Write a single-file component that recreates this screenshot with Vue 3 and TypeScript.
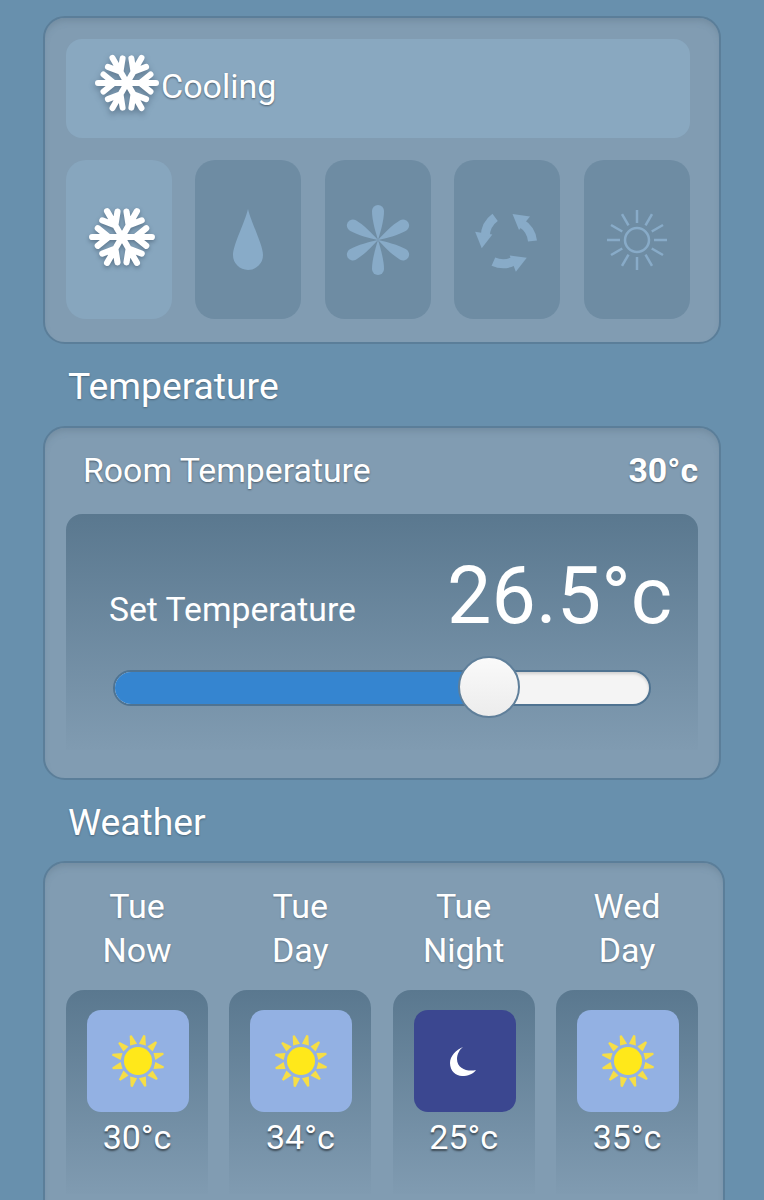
<template>
  <div class="page">
    <section class="panel mode-panel">
      <div class="current">
        <svg class="flake-big" viewBox="-33 -33 66 66">
          <g v-for="a in flakeAngles" :key="a" :transform="`rotate(${a})`">
            <path class="flake-arm" d="M0 0H29M13 0L23.5 -8.5M13 0L23.5 8.5" />
          </g>
        </svg>
        <span class="current-label">Cooling</span>
      </div>
      <div class="modes">
        <div class="mode active">
          <svg class="flake-small" viewBox="-33 -33 66 66">
            <g v-for="a in flakeAngles" :key="a" :transform="`rotate(${a})`">
              <path class="flake-arm" d="M0 0H29M13 0L23.5 -8.5M13 0L23.5 8.5" />
            </g>
          </svg>
        </div>
        <div class="mode">
          <svg class="mode-icon" viewBox="-36 -36 72 72">
            <path class="fill" d="M0 -31C3 -18 15 5 15 15A15 15 0 0 1 -15 15C-15 5 -3 -18 0 -31Z" />
          </svg>
        </div>
        <div class="mode">
          <svg class="mode-icon" viewBox="-36 -36 72 72">
            <path
              v-for="a in flakeAngles"
              :key="a"
              class="fill"
              :transform="`rotate(${a})`"
              d="M0 0C-2.5 -8 -6 -20 -6 -29A6 6 0 0 1 6 -29C6 -20 2.5 -8 0 0Z"
            />
          </svg>
        </div>
        <div class="mode">
          <svg class="mode-icon" viewBox="-36 -36 72 72">
            <g v-for="a in recycleAngles" :key="a" :transform="`rotate(${a})`">
              <path class="fill" d="M5.5 -26L23 -23.5L12 -10Z" />
              <path class="arc" d="M14 -17A24 24 0 0 1 25.5 1" />
            </g>
          </svg>
        </div>
        <div class="mode">
          <svg class="mode-icon" viewBox="-36 -36 72 72">
            <circle class="ring" cx="0" cy="0" r="12" />
            <path
              v-for="a in rayAngles"
              :key="a"
              class="ray"
              :transform="`rotate(${a})`"
              d="M17 0H30"
            />
          </svg>
        </div>
      </div>
    </section>

    <h2 class="heading">Temperature</h2>
    <section class="panel temp-panel">
      <div class="room">
        <span>Room Temperature</span>
        <strong>30°c</strong>
      </div>
      <div class="setter">
        <div class="set-row">
          <span class="set-label">Set Temperature</span>
          <span class="set-value">{{ setTemp }}°c</span>
        </div>
        <div class="slider">
          <div class="slider-fill" :style="{ width: sliderPercent + '%' }"></div>
          <div class="slider-thumb" :style="{ left: sliderPercent + '%' }"></div>
        </div>
      </div>
    </section>

    <h2 class="heading">Weather</h2>
    <section class="panel weather-panel">
      <div class="days">
        <div class="day" v-for="f in forecast" :key="f.day + f.part">
          <div class="day-name">{{ f.day }}<br />{{ f.part }}</div>
          <div class="card">
            <div class="sky" :class="{ night: f.night }">
              <svg class="sky-icon" viewBox="-30 -30 60 60">
                <path
                  v-if="f.night"
                  class="moon"
                  d="M-2 -14C-9 -11 -15 -5 -15 2C-15 10 -9 15 -3 15C3 15 8 13 11 9C3 11 -8 8 -8 -2C-8 -7 -5 -12 -2 -14Z"
                />
                <template v-else>
                  <circle class="sun" cx="0" cy="0" r="14" />
                  <path
                    v-for="a in sunRays"
                    :key="a"
                    class="sun-ray"
                    :transform="`rotate(${a})`"
                    d="M17 -3.6L26.5 -1.5L26.5 0.5L17 3.6Z"
                  />
                </template>
              </svg>
            </div>
            <div class="card-temp">{{ f.temp }}°c</div>
          </div>
        </div>
      </div>
    </section>
  </div>
</template>

<script setup lang="ts">
import { ref } from 'vue';

interface Forecast {
  day: string;
  part: string;
  temp: number;
  night?: boolean;
}

const flakeAngles = [0, 60, 120, 180, 240, 300];
const recycleAngles = [0, 120, 240];
const rayAngles = [0, 30, 60, 90, 120, 150, 180, 210, 240, 270, 300, 330];
const sunRays = rayAngles.map(a => a + 15);

const setTemp = ref(26.5);
const sliderPercent = ref(70);

const forecast = ref<Forecast[]>([
  { day: 'Tue', part: 'Now', temp: 30 },
  { day: 'Tue', part: 'Day', temp: 34 },
  { day: 'Tue', part: 'Night', temp: 25, night: true },
  { day: 'Wed', part: 'Day', temp: 35 },
]);
</script>

<style>
html, body {
  margin: 0;
  background: #6890ad;
}
</style>

<style scoped>
.page {
  box-sizing: border-box;
  height: 1200px;
  overflow: hidden;
  padding: 16px 0 0 43px;
  font-family: Roboto, "Liberation Sans", sans-serif;
  color: #fff;
  background: #6890ad;
}

.panel {
  box-sizing: border-box;
  width: 678px;
  background: #819cb2;
  border: 2px solid #5b7e99;
  border-radius: 22px;
  box-shadow: inset 0 5px 6px -2px rgba(88, 112, 128, 0.35);
}

.mode-panel {
  height: 328px;
  padding: 21px 29px 0 21px;
}

.mode-panel + .heading {
  margin-bottom: 19px;
}

.current {
  display: flex;
  align-items: center;
  gap: 1px;
  height: 99px;
  padding-left: 28px;
  background: #89a8c0;
  border-radius: 16px;
  font-size: 34px;
  text-shadow: 0 1px 2px rgba(0, 0, 0, 0.45);
}

.current-label {
  padding-bottom: 6px;
}

.flake-big {
  width: 66px;
  height: 66px;
  margin-top: -12px;
  filter: drop-shadow(0 3px 3px rgba(40, 60, 80, 0.45));
}

.flake-arm {
  fill: none;
  stroke: #fff;
  stroke-width: 6;
  stroke-linecap: round;
}

.modes {
  display: flex;
  gap: 23.4px;
  margin-top: 22px;
}

.mode {
  display: flex;
  align-items: center;
  justify-content: center;
  width: 106px;
  height: 159px;
  background: #6e8ca3;
  border-radius: 20px;
}

.mode.active {
  background: #87a6be;
}

.flake-small {
  width: 68px;
  height: 68px;
  margin: -5px 0 0 6px;
  filter: drop-shadow(0 2px 2px rgba(40, 60, 80, 0.45));
}

.mode-icon {
  width: 72px;
  height: 72px;
}

.fill {
  fill: #88abc8;
}

.arc {
  fill: none;
  stroke: #88abc8;
  stroke-width: 9;
}

.ring {
  fill: none;
  stroke: #88abc8;
  stroke-width: 2.5;
}

.ray {
  fill: none;
  stroke: #88abc8;
  stroke-width: 2.5;
}

.heading {
  margin: 21px 0 18px;
  padding-left: 25px;
  font-size: 37.3px;
  font-weight: 400;
  line-height: 42px;
  text-shadow: 0 1px 2px rgba(0, 0, 0, 0.3);
}

.temp-panel {
  height: 354px;
  padding: 0 21px;
}

.room {
  display: flex;
  justify-content: space-between;
  align-items: center;
  box-sizing: border-box;
  height: 86px;
  padding: 0 0 2px 17px;
  font-size: 33.8px;
  text-shadow: 0 1px 2px rgba(0, 0, 0, 0.4);
}

.room strong {
  font-weight: 700;
}

.setter {
  height: 236px;
  padding: 0 47px;
  box-sizing: border-box;
  background: linear-gradient(#5a788f, #809bb1);
  border-radius: 16px 16px 0 0;
}

.set-row {
  display: flex;
  justify-content: space-between;
  align-items: flex-end;
  height: 119px;
  margin-right: -21px;
  margin-left: -4px;
}

.set-label {
  margin-bottom: 1px;
  font-size: 33.7px;
  line-height: 44px;
}

.set-value {
  margin-bottom: -6px;
  font-size: 79px;
  line-height: 86px;
}

.slider {
  position: relative;
  box-sizing: border-box;
  width: 538px;
  height: 36px;
  margin-top: 37px;
  background: #f4f4f4;
  border: 2px solid #4f7391;
  border-radius: 18px;
  box-shadow: inset 0 2px 3px rgba(0, 0, 0, 0.15);
}

.slider-fill {
  height: 100%;
  background: #3585d0;
  border-radius: 16px 0 0 16px;
}

.slider-thumb {
  position: absolute;
  top: calc(50% - 1px);
  width: 62px;
  height: 62px;
  box-sizing: border-box;
  transform: translate(-50%, -50%);
  background: linear-gradient(#fafafa, #ececec);
  border: 2px solid #5f7f9a;
  border-radius: 50%;
}

.weather-panel {
  width: 682px;
  height: 360px;
  padding: 0 25px 0 21px;
}

.days {
  display: flex;
  justify-content: space-between;
}

.day {
  width: 142px;
}

.day-name {
  height: 127px;
  padding-top: 21px;
  box-sizing: border-box;
  font-size: 34px;
  line-height: 44px;
  text-align: center;
  text-shadow: 0 1px 2px rgba(0, 0, 0, 0.25);
}

.card {
  height: 204px;
  padding-top: 20px;
  box-sizing: border-box;
  background: linear-gradient(#5a788f, #809bb1);
  border-radius: 18px 18px 0 0;
}

.sky {
  display: flex;
  align-items: center;
  justify-content: center;
  width: 102px;
  height: 102px;
  margin-left: 21px;
  background: #93b1e3;
  border-radius: 14px;
}

.sky.night {
  background: #3b4790;
}

.sky-icon {
  width: 60px;
  height: 60px;
}

.sun {
  fill: #ffe81a;
}

.sun-ray {
  fill: #f6de46;
}

.moon {
  fill: #fff;
}

.card-temp {
  margin-top: 6px;
  font-size: 34px;
  line-height: 38px;
  text-align: center;
  text-shadow: 0 2px 2px rgba(0, 0, 0, 0.5);
}
</style>
